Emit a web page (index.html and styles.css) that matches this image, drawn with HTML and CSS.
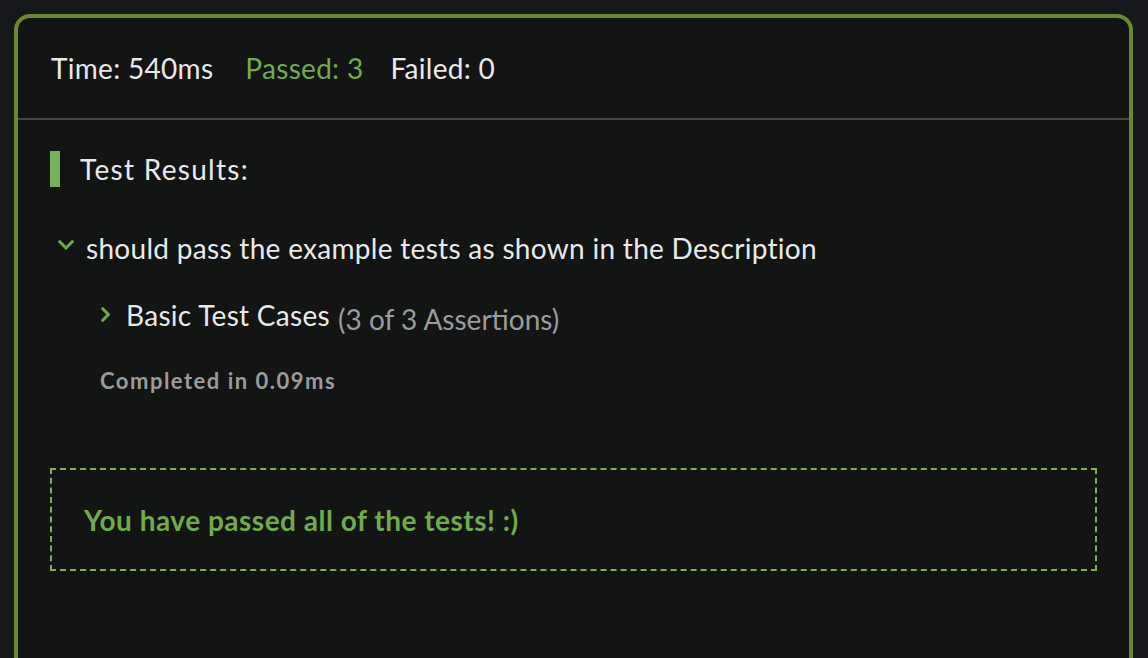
FILE: index.html
```html
<!DOCTYPE html>
<html lang="en">
<head>
<meta charset="utf-8">
<title>Test Results</title>
<link rel="stylesheet" href="styles.css">
</head>
<body>
<div class="card">
  <div class="stats">
    <span class="stat stat-time">Time: 540ms</span>
    <span class="stat stat-pass">Passed: 3</span>
    <span class="stat">Failed: 0</span>
  </div>
  <div class="results">
    <h2 class="results-title">Test Results:</h2>
    <div class="describe">
      <div class="describe-head">
        <svg class="chev-down" width="16" height="10" viewBox="0 0 16 10"><path d="M1.8 1.8 L8 8 L14.2 1.8" fill="none" stroke="#6fa844" stroke-width="3" stroke-linecap="square"/></svg>
        <span>should pass the example tests as shown in the Description</span>
      </div>
      <div class="it-head">
        <svg class="chev-right" width="9" height="15" viewBox="0 0 9 15"><path d="M1.8 1.8 L7.4 7.5 L1.8 13.2" fill="none" stroke="#6fa844" stroke-width="3" stroke-linecap="square"/></svg>
        <span class="it-name">Basic Test Cases</span>
        <span class="it-count">(3 of 3 Assertions)</span>
      </div>
      <div class="completed">Completed in 0.09ms</div>
    </div>
    <div class="passed-box">You have passed all of the tests! :)</div>
  </div>
</div>
</body>
</html>
```

FILE: styles.css
```css
html, body {
  margin: 0;
  height: 100%;
  overflow: hidden;
}
body {
  background: #17181c;
  padding: 14px 15px 0 14px;
  box-sizing: border-box;
  font-family: Lato, "Open Sans", sans-serif;
  color: #e9e9e9;
}
.card {
  border: 4px solid #6b8a2f;
  border-radius: 16px;
  background: #131414;
  height: 720px;
}
.stats {
  height: 100px;
  display: flex;
  align-items: center;
  padding-left: 33px;
  border-bottom: 2px solid #464747;
  font-size: 28px;
  letter-spacing: 0.3px;
}
.stat-time {
  margin-right: 32px;
}
.stat-pass {
  color: #72ab4c;
  margin-right: 27px;
}
.results {
  padding: 31px 32px 0 32px;
}
.results-title {
  margin: 0;
  height: 36px;
  display: flex;
  align-items: center;
  font-size: 28px;
  font-weight: normal;
  letter-spacing: 1.3px;
}
.results-title::before {
  content: "";
  width: 10px;
  height: 36px;
  background: #78b258;
  margin-right: 20px;
}
.describe {
  font-size: 28px;
  letter-spacing: 0.3px;
}
.describe-head {
  margin-top: 43px;
  height: 36px;
  display: flex;
  align-items: center;
}
.chev-down {
  margin-left: 8px;
  margin-right: 12px;
  margin-bottom: 6px;
}
.it-head {
  margin-top: 32px;
  height: 36px;
  display: flex;
  align-items: baseline;
  padding-left: 51px;
}
.chev-right {
  margin-right: 16px;
  align-self: center;
  margin-bottom: 4px;
}
.it-count {
  color: #9b9b9b;
  margin-left: 8px;
  letter-spacing: 0;
  position: relative;
  top: 4px;
}
.completed {
  margin-top: 32px;
  padding-left: 50px;
  font-size: 22px;
  font-weight: bold;
  color: #9b9b9b;
  letter-spacing: 1.5px;
  line-height: 30px;
}
.passed-box {
  margin-top: 72px;
  height: 99px;
  border: 2px dashed #78b258;
  display: flex;
  align-items: center;
  padding-left: 32px;
  font-size: 28px;
  font-weight: bold;
  letter-spacing: 0.5px;
  color: #72ab4c;
}
```
